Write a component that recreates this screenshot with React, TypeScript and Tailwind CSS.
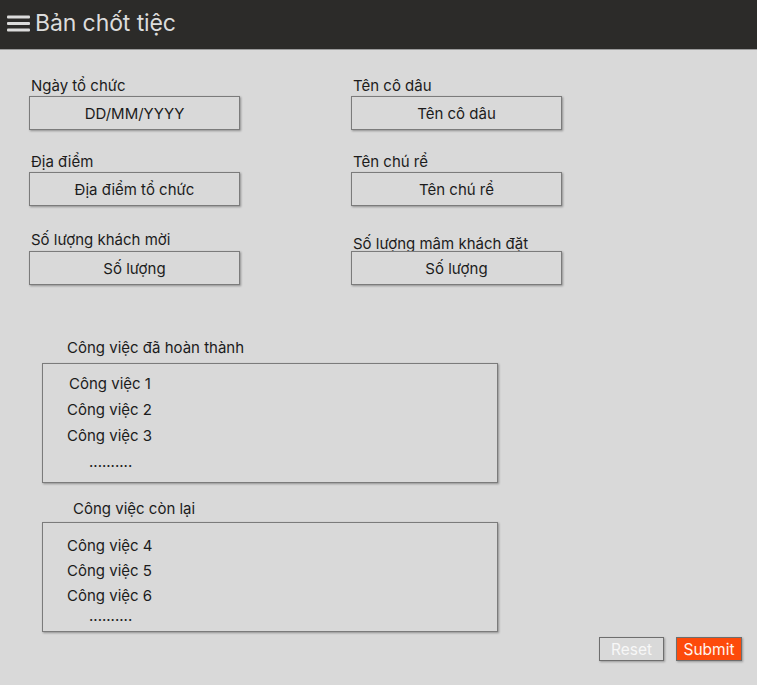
import React from "react";

const font = { fontFamily: "Inter, 'Noto Sans', sans-serif" };

function Field({
  label,
  placeholder,
  labelCls,
  inputCls,
}: {
  label: string;
  placeholder: string;
  labelCls: string;
  inputCls: string;
}) {
  return (
    <div className="flex flex-col">
      <div className={`h-[20px] leading-[22px] text-[15px] text-[#1c1c1c] pl-[2px] whitespace-nowrap ${labelCls}`}>{label}</div>
      <div
        className={`h-[34px] w-[211px] border border-[#7b7b7b] bg-[#d9d9d9] shadow-[1px_1px_2px_rgba(0,0,0,0.35)] flex items-center justify-center pt-[2px] text-[15px] text-[#1c1c1c] ${inputCls}`}
      >
        {placeholder}
      </div>
    </div>
  );
}

function TaskBox({
  title,
  items,
  titleCls,
  boxCls,
}: {
  title: string;
  items: { text: string; cls: string }[];
  titleCls: string;
  boxCls: string;
}) {
  return (
    <div className="flex flex-col">
      <div className={`h-[20px] leading-[20px] text-[15px] text-[#1c1c1c] ${titleCls}`}>{title}</div>
      <div
        className={`w-[456px] border border-[#7b7b7b] bg-[#d9d9d9] shadow-[1px_1px_2px_rgba(0,0,0,0.35)] ${boxCls}`}
      >
        {items.map((it, i) => (
          <div key={i} className={`text-[15px] text-[#1c1c1c] ${it.cls}`}>
            {it.text}
          </div>
        ))}
      </div>
    </div>
  );
}

export default function App() {
  return (
    <div className="w-[757px] h-[685px] bg-[#d9d9d9] overflow-hidden" style={font}>
      <header className="h-[50px] bg-[#2c2b29] border-b border-[#9a9a9a] flex items-center pl-[7px] gap-[5px]">
        <svg width="23" height="17" viewBox="0 0 23 17" className="mb-[2px]">
          <rect x="0" y="0.5" width="23" height="3" rx="1" fill="#dcdcdc" />
          <rect x="0" y="7" width="23" height="3" rx="1" fill="#dcdcdc" />
          <rect x="0" y="13.5" width="23" height="3" rx="1" fill="#dcdcdc" />
        </svg>
        <span className="text-[23px] text-[#dcdcdc] leading-none mb-[3px] tracking-[-0.1px]">Bản chốt tiệc</span>
      </header>

      <main className="pl-[29px] pt-[25px]">
        <div className="grid grid-cols-[211px_211px] gap-x-[111px]">
          <Field label="Ngày tổ chức" placeholder="DD/MM/YYYY" labelCls="" inputCls="mt-[1px]" />
          <Field label="Tên cô dâu" placeholder="Tên cô dâu" labelCls="" inputCls="mt-[1px]" />
          <Field label="Địa điểm" placeholder="Địa điểm tổ chức" labelCls="mt-[21px]" inputCls="mt-[1px]" />
          <Field label="Tên chú rể" placeholder="Tên chú rể" labelCls="mt-[21px]" inputCls="mt-[1px]" />
          <Field label="Số lượng khách mời" placeholder="Số lượng" labelCls="mt-[23px]" inputCls="mt-[2px]" />
          <Field label="Số lượng mâm khách đặt" placeholder="Số lượng" labelCls="mt-[27px]" inputCls="mt-[-2px]" />
        </div>

        <div className="pl-[13px] mt-[53px]">
          <TaskBox
            title="Công việc đã hoàn thành"
            titleCls="pl-[25px]"
            boxCls="h-[120px] mt-[5px] pt-[7px]"
            items={[
              { text: "Công việc 1", cls: "leading-[26px] pl-[26px]" },
              { text: "Công việc 2", cls: "leading-[26px] pl-[24px]" },
              { text: "Công việc 3", cls: "leading-[26px] pl-[24px]" },
              { text: "..........", cls: "leading-[26px] pl-[46px]" },
            ]}
          />
          <TaskBox
            title="Công việc còn lại"
            titleCls="pl-[31px] mt-[16px]"
            boxCls="h-[110px] mt-[3px] pt-[10px]"
            items={[
              { text: "Công việc 4", cls: "leading-[25px] pl-[24px]" },
              { text: "Công việc 5", cls: "leading-[25px] pl-[24px]" },
              { text: "Công việc 6", cls: "leading-[25px] pl-[24px]" },
              { text: "..........", cls: "leading-[16px] pl-[46px]" },
            ]}
          />
        </div>

        <div className="flex justify-end gap-[12px] pr-[15px] mt-[5px]">
          <button className="w-[65px] h-[24px] border border-[#6e6e6e] bg-[#d9d9d9] text-[15.5px] text-[#f7f7f7] shadow-[1px_1px_2px_rgba(0,0,0,0.3)] leading-none pt-[2px]">
            Reset
          </button>
          <button className="w-[66px] h-[24px] border border-[#6e6e6e] bg-[#fd4a0b] text-[15.5px] text-[#fff4ee] shadow-[1px_1px_2px_rgba(0,0,0,0.3)] leading-none pt-[2px]">
            Submit
          </button>
        </div>
      </main>
    </div>
  );
}
